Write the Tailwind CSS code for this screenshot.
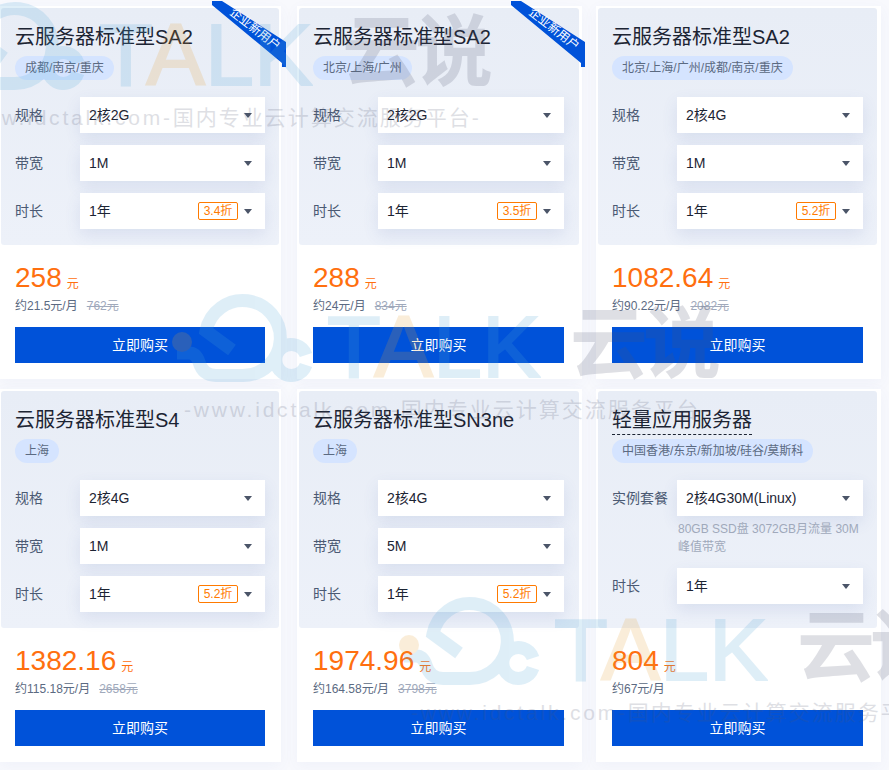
<!DOCTYPE html>
<html lang="zh-CN">
<head>
  <meta charset="UTF-8"/>
  <title>云服务器</title>
  <script src="https://cdn.jsdelivr.net/npm/@tailwindcss/browser@4"></script>
</head>
<body class="relative w-[889px] h-[770px] overflow-hidden bg-[#f8f9fd] font-['Liberation_Sans','Noto_Sans_CJK_SC',sans-serif] text-[#1c2433]">

  <!-- cards -->
  <div class="grid grid-cols-[281px_281px_281px] gap-x-[18px] gap-y-[10px] pt-[6px]">

    <!-- SA2 #1 -->
    <div class="relative h-[373px] bg-white pl-px pt-[2px] shadow-[0_4px_14px_rgba(70,100,170,0.05)]">
      <div class="h-[237px] w-[278px] rounded-[3px] bg-gradient-to-b from-[#e8edf6] to-[#edf1f9] pl-[14px]">
        <h3 class="pt-[15px] text-[20px] leading-[28px]">云服务器标准型SA2</h3>
        <span class="mt-[5px] inline-block h-[24px] rounded-full bg-[#d5e4ff] px-[10px] text-[12px] leading-[24px] text-[#5b6a82]">成都/南京/重庆</span>
        <div class="mt-[17px] flex flex-col gap-[12px]">
          <div class="flex items-center">
            <span class="w-[65px] text-[14px] text-[#4b5a73]">规格</span>
            <div class="flex h-[36px] w-[185px] items-center bg-white pl-[9px] pr-[13px] text-[14px] shadow-[0_6px_16px_rgba(70,100,170,0.12)]">
              <span class="flex-1">2核2G</span>
              <span class="h-0 w-0 border-x-[4px] border-t-[5px] border-x-transparent border-t-[#4b5568]"></span>
            </div>
          </div>
          <div class="flex items-center">
            <span class="w-[65px] text-[14px] text-[#4b5a73]">带宽</span>
            <div class="flex h-[36px] w-[185px] items-center bg-white pl-[9px] pr-[13px] text-[14px] shadow-[0_6px_16px_rgba(70,100,170,0.12)]">
              <span class="flex-1">1M</span>
              <span class="h-0 w-0 border-x-[4px] border-t-[5px] border-x-transparent border-t-[#4b5568]"></span>
            </div>
          </div>
          <div class="flex items-center">
            <span class="w-[65px] text-[14px] text-[#4b5a73]">时长</span>
            <div class="flex h-[36px] w-[185px] items-center bg-white pl-[9px] pr-[13px] text-[14px] shadow-[0_6px_16px_rgba(70,100,170,0.12)]">
              <span class="flex-1">1年</span>
              <span class="mr-[6px] h-[18px] w-[40px] rounded-[2px] border border-[#ff7a00] text-center text-[12px] leading-[16px] text-[#ff7a00]">3.4折</span>
              <span class="h-0 w-0 border-x-[4px] border-t-[5px] border-x-transparent border-t-[#4b5568]"></span>
            </div>
          </div>
        </div>
      </div>
      <div class="pl-[14px] pt-[15px]">
        <div class="flex h-[36px] items-end text-[#ff6f0f]"><span class="text-[28px] leading-[36px]">258</span><span class="mb-[2px] ml-[5px] text-[12px] leading-[20px]">元</span></div>
        <p class="mt-px text-[12px] leading-[18px] text-[#5b6a82]">约21.5元/月<s class="ml-[9px] text-[#a0a9bb]">762元</s></p>
        <button class="mt-[12px] h-[36px] w-[250px] bg-[#0052d9] text-[14px] text-white">立即购买</button>
      </div>
      <svg class="absolute left-[212px] top-[-5px] overflow-visible" width="74" height="66" viewBox="0 0 74 66"><polygon points="0,0 10,0 74,41 74,66 70,66 70,62 0,4" fill="#0052d9"/></svg>
      <span class="absolute left-[225px] top-[14px] w-[60px] rotate-[38deg] text-center text-[12px] leading-[18px] text-white">企业新用户</span>
    </div>

    <!-- SA2 #2 -->
    <div class="relative -ml-[2px] h-[373px] w-[285px] bg-white pl-[2px] pt-[2px] shadow-[0_4px_14px_rgba(70,100,170,0.05)]">
      <div class="h-[237px] w-[280px] rounded-[3px] bg-gradient-to-b from-[#e8edf6] to-[#edf1f9] pl-[14px]">
        <h3 class="pt-[15px] text-[20px] leading-[28px]">云服务器标准型SA2</h3>
        <span class="mt-[5px] inline-block h-[24px] rounded-full bg-[#d5e4ff] px-[10px] text-[12px] leading-[24px] text-[#5b6a82]">北京/上海/广州</span>
        <div class="mt-[17px] flex flex-col gap-[12px]">
          <div class="flex items-center">
            <span class="w-[65px] text-[14px] text-[#4b5a73]">规格</span>
            <div class="flex h-[36px] w-[186px] items-center bg-white pl-[9px] pr-[13px] text-[14px] shadow-[0_6px_16px_rgba(70,100,170,0.12)]">
              <span class="flex-1">2核2G</span>
              <span class="h-0 w-0 border-x-[4px] border-t-[5px] border-x-transparent border-t-[#4b5568]"></span>
            </div>
          </div>
          <div class="flex items-center">
            <span class="w-[65px] text-[14px] text-[#4b5a73]">带宽</span>
            <div class="flex h-[36px] w-[186px] items-center bg-white pl-[9px] pr-[13px] text-[14px] shadow-[0_6px_16px_rgba(70,100,170,0.12)]">
              <span class="flex-1">1M</span>
              <span class="h-0 w-0 border-x-[4px] border-t-[5px] border-x-transparent border-t-[#4b5568]"></span>
            </div>
          </div>
          <div class="flex items-center">
            <span class="w-[65px] text-[14px] text-[#4b5a73]">时长</span>
            <div class="flex h-[36px] w-[186px] items-center bg-white pl-[9px] pr-[13px] text-[14px] shadow-[0_6px_16px_rgba(70,100,170,0.12)]">
              <span class="flex-1">1年</span>
              <span class="mr-[6px] h-[18px] w-[40px] rounded-[2px] border border-[#ff7a00] text-center text-[12px] leading-[16px] text-[#ff7a00]">3.5折</span>
              <span class="h-0 w-0 border-x-[4px] border-t-[5px] border-x-transparent border-t-[#4b5568]"></span>
            </div>
          </div>
        </div>
      </div>
      <div class="pl-[14px] pt-[15px]">
        <div class="flex h-[36px] items-end text-[#ff6f0f]"><span class="text-[28px] leading-[36px]">288</span><span class="mb-[2px] ml-[5px] text-[12px] leading-[20px]">元</span></div>
        <p class="mt-px text-[12px] leading-[18px] text-[#5b6a82]">约24元/月<s class="ml-[9px] text-[#a0a9bb]">834元</s></p>
        <button class="mt-[12px] h-[36px] w-[251px] bg-[#0052d9] text-[14px] text-white">立即购买</button>
      </div>
      <svg class="absolute left-[214px] top-[-5px] overflow-visible" width="74" height="66" viewBox="0 0 74 66"><polygon points="0,0 10,0 74,41 74,66 70,66 70,62 0,4" fill="#0052d9"/></svg>
      <span class="absolute left-[227px] top-[14px] w-[60px] rotate-[38deg] text-center text-[12px] leading-[18px] text-white">企业新用户</span>
    </div>

    <!-- SA2 #3 -->
    <div class="relative -ml-[2px] h-[373px] w-[285px] bg-white pl-[2px] pt-[2px] shadow-[0_4px_14px_rgba(70,100,170,0.05)]">
      <div class="h-[237px] w-[279px] rounded-[3px] bg-gradient-to-b from-[#e8edf6] to-[#edf1f9] pl-[14px]">
        <h3 class="pt-[15px] text-[20px] leading-[28px]">云服务器标准型SA2</h3>
        <span class="mt-[5px] inline-block h-[24px] rounded-full bg-[#d5e4ff] px-[10px] text-[12px] leading-[24px] text-[#5b6a82]">北京/上海/广州/成都/南京/重庆</span>
        <div class="mt-[17px] flex flex-col gap-[12px]">
          <div class="flex items-center">
            <span class="w-[65px] text-[14px] text-[#4b5a73]">规格</span>
            <div class="flex h-[36px] w-[186px] items-center bg-white pl-[9px] pr-[13px] text-[14px] shadow-[0_6px_16px_rgba(70,100,170,0.12)]">
              <span class="flex-1">2核4G</span>
              <span class="h-0 w-0 border-x-[4px] border-t-[5px] border-x-transparent border-t-[#4b5568]"></span>
            </div>
          </div>
          <div class="flex items-center">
            <span class="w-[65px] text-[14px] text-[#4b5a73]">带宽</span>
            <div class="flex h-[36px] w-[186px] items-center bg-white pl-[9px] pr-[13px] text-[14px] shadow-[0_6px_16px_rgba(70,100,170,0.12)]">
              <span class="flex-1">1M</span>
              <span class="h-0 w-0 border-x-[4px] border-t-[5px] border-x-transparent border-t-[#4b5568]"></span>
            </div>
          </div>
          <div class="flex items-center">
            <span class="w-[65px] text-[14px] text-[#4b5a73]">时长</span>
            <div class="flex h-[36px] w-[186px] items-center bg-white pl-[9px] pr-[13px] text-[14px] shadow-[0_6px_16px_rgba(70,100,170,0.12)]">
              <span class="flex-1">1年</span>
              <span class="mr-[6px] h-[18px] w-[40px] rounded-[2px] border border-[#ff7a00] text-center text-[12px] leading-[16px] text-[#ff7a00]">5.2折</span>
              <span class="h-0 w-0 border-x-[4px] border-t-[5px] border-x-transparent border-t-[#4b5568]"></span>
            </div>
          </div>
        </div>
      </div>
      <div class="pl-[14px] pt-[15px]">
        <div class="flex h-[36px] items-end text-[#ff6f0f]"><span class="text-[28px] leading-[36px]">1082.64</span><span class="mb-[2px] ml-[5px] text-[12px] leading-[20px]">元</span></div>
        <p class="mt-px text-[12px] leading-[18px] text-[#5b6a82]">约90.22元/月<s class="ml-[9px] text-[#a0a9bb]">2082元</s></p>
        <button class="mt-[12px] h-[36px] w-[251px] bg-[#0052d9] text-[14px] text-white">立即购买</button>
      </div>
    </div>

    <!-- S4 -->
    <div class="relative h-[373px] bg-white pl-px pt-[2px] shadow-[0_4px_14px_rgba(70,100,170,0.05)]">
      <div class="h-[237px] w-[278px] rounded-[3px] bg-gradient-to-b from-[#e8edf6] to-[#edf1f9] pl-[14px]">
        <h3 class="pt-[15px] text-[20px] leading-[28px]">云服务器标准型S4</h3>
        <span class="mt-[5px] inline-block h-[24px] rounded-full bg-[#d5e4ff] px-[10px] text-[12px] leading-[24px] text-[#5b6a82]">上海</span>
        <div class="mt-[17px] flex flex-col gap-[12px]">
          <div class="flex items-center">
            <span class="w-[65px] text-[14px] text-[#4b5a73]">规格</span>
            <div class="flex h-[36px] w-[185px] items-center bg-white pl-[9px] pr-[13px] text-[14px] shadow-[0_6px_16px_rgba(70,100,170,0.12)]">
              <span class="flex-1">2核4G</span>
              <span class="h-0 w-0 border-x-[4px] border-t-[5px] border-x-transparent border-t-[#4b5568]"></span>
            </div>
          </div>
          <div class="flex items-center">
            <span class="w-[65px] text-[14px] text-[#4b5a73]">带宽</span>
            <div class="flex h-[36px] w-[185px] items-center bg-white pl-[9px] pr-[13px] text-[14px] shadow-[0_6px_16px_rgba(70,100,170,0.12)]">
              <span class="flex-1">1M</span>
              <span class="h-0 w-0 border-x-[4px] border-t-[5px] border-x-transparent border-t-[#4b5568]"></span>
            </div>
          </div>
          <div class="flex items-center">
            <span class="w-[65px] text-[14px] text-[#4b5a73]">时长</span>
            <div class="flex h-[36px] w-[185px] items-center bg-white pl-[9px] pr-[13px] text-[14px] shadow-[0_6px_16px_rgba(70,100,170,0.12)]">
              <span class="flex-1">1年</span>
              <span class="mr-[6px] h-[18px] w-[40px] rounded-[2px] border border-[#ff7a00] text-center text-[12px] leading-[16px] text-[#ff7a00]">5.2折</span>
              <span class="h-0 w-0 border-x-[4px] border-t-[5px] border-x-transparent border-t-[#4b5568]"></span>
            </div>
          </div>
        </div>
      </div>
      <div class="pl-[14px] pt-[15px]">
        <div class="flex h-[36px] items-end text-[#ff6f0f]"><span class="text-[28px] leading-[36px]">1382.16</span><span class="mb-[2px] ml-[5px] text-[12px] leading-[20px]">元</span></div>
        <p class="mt-px text-[12px] leading-[18px] text-[#5b6a82]">约115.18元/月<s class="ml-[9px] text-[#a0a9bb]">2658元</s></p>
        <button class="mt-[12px] h-[36px] w-[250px] bg-[#0052d9] text-[14px] text-white">立即购买</button>
      </div>
    </div>

    <!-- SN3ne -->
    <div class="relative -ml-[2px] h-[373px] w-[285px] bg-white pl-[2px] pt-[2px] shadow-[0_4px_14px_rgba(70,100,170,0.05)]">
      <div class="h-[237px] w-[280px] rounded-[3px] bg-gradient-to-b from-[#e8edf6] to-[#edf1f9] pl-[14px]">
        <h3 class="pt-[15px] text-[20px] leading-[28px]">云服务器标准型SN3ne</h3>
        <span class="mt-[5px] inline-block h-[24px] rounded-full bg-[#d5e4ff] px-[10px] text-[12px] leading-[24px] text-[#5b6a82]">上海</span>
        <div class="mt-[17px] flex flex-col gap-[12px]">
          <div class="flex items-center">
            <span class="w-[65px] text-[14px] text-[#4b5a73]">规格</span>
            <div class="flex h-[36px] w-[186px] items-center bg-white pl-[9px] pr-[13px] text-[14px] shadow-[0_6px_16px_rgba(70,100,170,0.12)]">
              <span class="flex-1">2核4G</span>
              <span class="h-0 w-0 border-x-[4px] border-t-[5px] border-x-transparent border-t-[#4b5568]"></span>
            </div>
          </div>
          <div class="flex items-center">
            <span class="w-[65px] text-[14px] text-[#4b5a73]">带宽</span>
            <div class="flex h-[36px] w-[186px] items-center bg-white pl-[9px] pr-[13px] text-[14px] shadow-[0_6px_16px_rgba(70,100,170,0.12)]">
              <span class="flex-1">5M</span>
              <span class="h-0 w-0 border-x-[4px] border-t-[5px] border-x-transparent border-t-[#4b5568]"></span>
            </div>
          </div>
          <div class="flex items-center">
            <span class="w-[65px] text-[14px] text-[#4b5a73]">时长</span>
            <div class="flex h-[36px] w-[186px] items-center bg-white pl-[9px] pr-[13px] text-[14px] shadow-[0_6px_16px_rgba(70,100,170,0.12)]">
              <span class="flex-1">1年</span>
              <span class="mr-[6px] h-[18px] w-[40px] rounded-[2px] border border-[#ff7a00] text-center text-[12px] leading-[16px] text-[#ff7a00]">5.2折</span>
              <span class="h-0 w-0 border-x-[4px] border-t-[5px] border-x-transparent border-t-[#4b5568]"></span>
            </div>
          </div>
        </div>
      </div>
      <div class="pl-[14px] pt-[15px]">
        <div class="flex h-[36px] items-end text-[#ff6f0f]"><span class="text-[28px] leading-[36px]">1974.96</span><span class="mb-[2px] ml-[5px] text-[12px] leading-[20px]">元</span></div>
        <p class="mt-px text-[12px] leading-[18px] text-[#5b6a82]">约164.58元/月<s class="ml-[9px] text-[#a0a9bb]">3798元</s></p>
        <button class="mt-[12px] h-[36px] w-[251px] bg-[#0052d9] text-[14px] text-white">立即购买</button>
      </div>
    </div>

    <!-- light server -->
    <div class="relative -ml-[2px] h-[373px] w-[285px] bg-white pl-[2px] pt-[2px] shadow-[0_4px_14px_rgba(70,100,170,0.05)]">
      <div class="h-[237px] w-[279px] rounded-[3px] bg-gradient-to-b from-[#e8edf6] to-[#edf1f9] pl-[14px]">
        <h3 class="pt-[15px] text-[20px] leading-[28px]"><span class="inline-block border-b border-dashed border-[#1c2433] leading-[27px]">轻量应用服务器</span></h3>
        <span class="mt-[4px] inline-block h-[24px] rounded-full bg-[#d5e4ff] px-[10px] text-[12px] leading-[24px] text-[#5b6a82]">中国香港/东京/新加坡/硅谷/莫斯科</span>
        <div class="mt-[17px] flex items-center">
          <span class="w-[65px] text-[14px] text-[#4b5a73]">实例套餐</span>
          <div class="flex h-[36px] w-[186px] items-center bg-white pl-[9px] pr-[13px] text-[14px] shadow-[0_6px_16px_rgba(70,100,170,0.12)]">
            <span class="flex-1">2核4G30M(Linux)</span>
            <span class="h-0 w-0 border-x-[4px] border-t-[5px] border-x-transparent border-t-[#4b5568]"></span>
          </div>
        </div>
        <p class="ml-[66px] mt-[4px] w-[184px] text-[12px] leading-[18px] text-[#a0a9bb]">80GB SSD盘 3072GB月流量 30M峰值带宽</p>
        <div class="mt-[12px] flex items-center">
          <span class="w-[65px] text-[14px] text-[#4b5a73]">时长</span>
          <div class="flex h-[36px] w-[186px] items-center bg-white pl-[9px] pr-[13px] text-[14px] shadow-[0_6px_16px_rgba(70,100,170,0.12)]">
            <span class="flex-1">1年</span>
            <span class="h-0 w-0 border-x-[4px] border-t-[5px] border-x-transparent border-t-[#4b5568]"></span>
          </div>
        </div>
      </div>
      <div class="pl-[14px] pt-[15px]">
        <div class="flex h-[36px] items-end text-[#ff6f0f]"><span class="text-[28px] leading-[36px]">804</span><span class="mb-[2px] ml-[5px] text-[12px] leading-[20px]">元</span></div>
        <p class="mt-px text-[12px] leading-[18px] text-[#5b6a82]">约67元/月</p>
        <button class="mt-[12px] h-[36px] w-[251px] bg-[#0052d9] text-[14px] text-white">立即购买</button>
      </div>
    </div>
  </div>

  <!-- watermarks, laid over the whole page -->
  <div class="pointer-events-none absolute left-[-54px] top-[-5px] h-[140px] w-[560px]">
    <svg class="absolute left-0 top-0 overflow-visible opacity-[0.18]" width="150" height="110" viewBox="0 0 150 110" fill="none"><path d="M3 66H15Q22 66 25 75Q29 88.500 42 88.500H69A37.500 37.500 0 1 0 32 44L58 63M132 68A15.500 15.500 0 1 0 132 78" stroke="#50a5d7" stroke-width="13"/><circle cx="8" cy="55" r="10" fill="#e6a032"/></svg>
    <span class="absolute left-[153px] top-[10px] text-[88px] leading-[100px] text-[#50a5d7] opacity-[0.18] [-webkit-text-stroke:2px_#50a5d7]">T<span class="text-[#e6a032] [-webkit-text-stroke:2px_#e6a032]">A</span>LK</span>
    <span class="absolute left-[396px] top-[8px] text-[78px] font-bold leading-[100px] tracking-[-5px] text-[#50556e] opacity-[0.18]">云说</span>
    <span class="absolute left-[10px] top-[109px] whitespace-nowrap text-[21px] leading-[28px] tracking-[2px] text-[#50556e] opacity-[0.18]"><span class="tracking-[2.800px]">-www.idctalk.com-</span>国内专业云计算交流服务平台-</span>
  </div>
  <div class="pointer-events-none absolute left-[174px] top-[287px] h-[140px] w-[560px]">
    <svg class="absolute left-0 top-0 overflow-visible opacity-[0.18]" width="150" height="110" viewBox="0 0 150 110" fill="none"><path d="M3 66H15Q22 66 25 75Q29 88.500 42 88.500H69A37.500 37.500 0 1 0 32 44L58 63M132 68A15.500 15.500 0 1 0 132 78" stroke="#50a5d7" stroke-width="13"/><circle cx="8" cy="55" r="10" fill="#e6a032"/></svg>
    <span class="absolute left-[153px] top-[10px] text-[88px] leading-[100px] text-[#50a5d7] opacity-[0.18] [-webkit-text-stroke:2px_#50a5d7]">T<span class="text-[#e6a032] [-webkit-text-stroke:2px_#e6a032]">A</span>LK</span>
    <span class="absolute left-[396px] top-[8px] text-[78px] font-bold leading-[100px] tracking-[-5px] text-[#50556e] opacity-[0.18]">云说</span>
    <span class="absolute left-[10px] top-[109px] whitespace-nowrap text-[21px] leading-[28px] tracking-[2px] text-[#50556e] opacity-[0.18]"><span class="tracking-[2.800px]">-www.idctalk.com-</span>国内专业云计算交流服务平台-</span>
  </div>
  <div class="pointer-events-none absolute left-[401px] top-[590px] h-[140px] w-[560px]">
    <svg class="absolute left-0 top-0 overflow-visible opacity-[0.18]" width="150" height="110" viewBox="0 0 150 110" fill="none"><path d="M3 66H15Q22 66 25 75Q29 88.500 42 88.500H69A37.500 37.500 0 1 0 32 44L58 63M132 68A15.500 15.500 0 1 0 132 78" stroke="#50a5d7" stroke-width="13"/><circle cx="8" cy="55" r="10" fill="#e6a032"/></svg>
    <span class="absolute left-[153px] top-[10px] text-[88px] leading-[100px] text-[#50a5d7] opacity-[0.18] [-webkit-text-stroke:2px_#50a5d7]">T<span class="text-[#e6a032] [-webkit-text-stroke:2px_#e6a032]">A</span>LK</span>
    <span class="absolute left-[396px] top-[8px] text-[78px] font-bold leading-[100px] tracking-[-5px] text-[#50556e] opacity-[0.18]">云说</span>
    <span class="absolute left-[10px] top-[109px] whitespace-nowrap text-[21px] leading-[28px] tracking-[2px] text-[#50556e] opacity-[0.18]"><span class="tracking-[2.800px]">-www.idctalk.com-</span>国内专业云计算交流服务平台-</span>
  </div>
</body>
</html>
